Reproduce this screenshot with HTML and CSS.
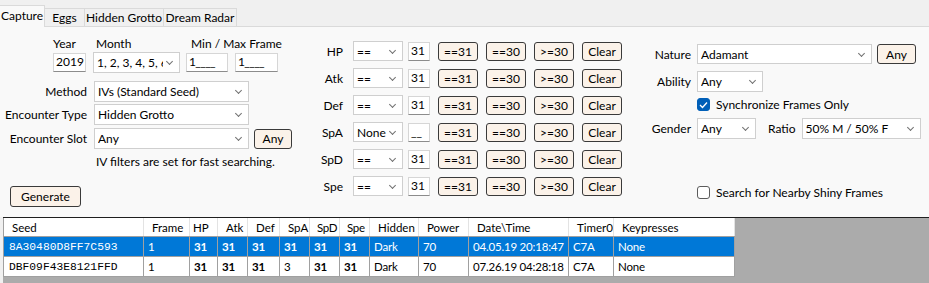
FILE: index.html
```html
<!DOCTYPE html>
<html lang="en">
<head>
  <meta charset="UTF-8">
  <title>Capture</title>
  <link rel="stylesheet" href="styles.css">
</head>
<body>

<div class="tabs">
  <div class="tab active">Capture</div>
  <div class="tab tab-eggs">Eggs</div>
  <div class="tab tab-grotto">Hidden Grotto</div>
  <div class="tab tab-radar">Dream Radar</div>
</div>

<div class="page">

  <div class="col-left">
    <div class="date-labels">
      <span class="lbl-year">Year</span>
      <span class="lbl-month">Month</span>
      <span>Min / Max Frame</span>
    </div>
    <div class="date-inputs">
      <div class="textbox tb-year">2019</div>
      <div class="combo cb-month"><span class="combo-text">1, 2, 3, 4, 5, 6</span></div>
      <div class="textbox tb-min">1____</div>
      <div class="textbox tb-max">1____</div>
    </div>
    <div class="field-row row-method">
      <span class="field-lbl">Method</span>
      <div class="combo cb-wide"><span class="combo-text">IVs (Standard Seed)</span></div>
    </div>
    <div class="field-row row-type">
      <span class="field-lbl">Encounter Type</span>
      <div class="combo cb-wide"><span class="combo-text">Hidden Grotto</span></div>
    </div>
    <div class="field-row row-slot">
      <span class="field-lbl">Encounter Slot</span>
      <div class="combo cb-wide"><span class="combo-text">Any</span></div>
      <button class="btn btn-any">Any</button>
    </div>
    <div class="note">IV filters are set for fast searching.</div>
    <button class="btn btn-generate">Generate</button>
  </div>

  <div class="col-ivs">
    <div class="iv-row">
      <span class="iv-lbl">HP</span>
      <div class="combo cb-op"><span class="combo-text">==</span></div>
      <div class="textbox tb-iv">31</div>
      <button class="btn btn-iv">==31</button><button class="btn btn-iv">==30</button><button class="btn btn-iv">&gt;=30</button><button class="btn btn-iv">Clear</button>
    </div>
    <div class="iv-row">
      <span class="iv-lbl">Atk</span>
      <div class="combo cb-op"><span class="combo-text">==</span></div>
      <div class="textbox tb-iv">31</div>
      <button class="btn btn-iv">==31</button><button class="btn btn-iv">==30</button><button class="btn btn-iv">&gt;=30</button><button class="btn btn-iv">Clear</button>
    </div>
    <div class="iv-row">
      <span class="iv-lbl">Def</span>
      <div class="combo cb-op"><span class="combo-text">==</span></div>
      <div class="textbox tb-iv">31</div>
      <button class="btn btn-iv">==31</button><button class="btn btn-iv">==30</button><button class="btn btn-iv">&gt;=30</button><button class="btn btn-iv">Clear</button>
    </div>
    <div class="iv-row">
      <span class="iv-lbl">SpA</span>
      <div class="combo cb-op"><span class="combo-text">None</span></div>
      <div class="textbox tb-iv">__</div>
      <button class="btn btn-iv">==31</button><button class="btn btn-iv">==30</button><button class="btn btn-iv">&gt;=30</button><button class="btn btn-iv">Clear</button>
    </div>
    <div class="iv-row">
      <span class="iv-lbl">SpD</span>
      <div class="combo cb-op"><span class="combo-text">==</span></div>
      <div class="textbox tb-iv">31</div>
      <button class="btn btn-iv">==31</button><button class="btn btn-iv">==30</button><button class="btn btn-iv">&gt;=30</button><button class="btn btn-iv">Clear</button>
    </div>
    <div class="iv-row">
      <span class="iv-lbl">Spe</span>
      <div class="combo cb-op"><span class="combo-text">==</span></div>
      <div class="textbox tb-iv">31</div>
      <button class="btn btn-iv">==31</button><button class="btn btn-iv">==30</button><button class="btn btn-iv">&gt;=30</button><button class="btn btn-iv">Clear</button>
    </div>
  </div>

  <div class="col-right">
    <div class="r-row row-nature">
      <span class="r-lbl">Nature</span>
      <div class="combo cb-nature"><span class="combo-text">Adamant</span></div>
      <button class="btn btn-any2">Any</button>
    </div>
    <div class="r-row row-ability">
      <span class="r-lbl">Ability</span>
      <div class="combo cb-ability"><span class="combo-text">Any</span></div>
    </div>
    <div class="check-row row-sync">
      <span class="checkbox checked"><svg width="9" height="8" viewBox="0 0 9 8"><polyline points="1,4 3.5,6.5 8,1.5" fill="none" stroke="#fff" stroke-width="1.3"/></svg></span>
      <span>Synchronize Frames Only</span>
    </div>
    <div class="r-row row-gender">
      <span class="r-lbl">Gender</span>
      <div class="combo cb-gender"><span class="combo-text">Any</span></div>
      <span class="lbl-ratio">Ratio</span>
      <div class="combo cb-ratio"><span class="combo-text">50% M / 50% F</span></div>
    </div>
    <div class="check-row row-shiny">
      <span class="checkbox"></span>
      <span>Search for Nearby Shiny Frames</span>
    </div>
  </div>

</div>

<div class="grid-area">
  <table class="results">
    <colgroup>
      <col class="c-seed"><col class="c-frame"><col class="c-hp"><col class="c-atk"><col class="c-def"><col class="c-spa"><col class="c-spd"><col class="c-spe"><col class="c-hidden"><col class="c-power"><col class="c-date"><col class="c-timer"><col class="c-keys">
    </colgroup>
    <tr>
      <th>Seed</th><th>Frame</th><th class="th-hp">HP</th><th>Atk</th><th>Def</th><th>SpA</th><th class="th-tight">SpD</th><th class="th-tight">Spe</th><th>Hidden</th><th>Power</th><th>Date\Time</th><th>Timer0</th><th>Keypresses</th>
    </tr>
    <tr class="selected">
      <td class="seed">8A30480D8FF7C593</td><td>1</td><td class="b">31</td><td class="b">31</td><td class="b">31</td><td class="b">31</td><td class="b">31</td><td class="b">31</td><td>Dark</td><td>70</td><td>04.05.19 20:18:47</td><td>C7A</td><td>None</td>
    </tr>
    <tr>
      <td class="seed">DBF09F43E8121FFD</td><td>1</td><td class="b">31</td><td class="b">31</td><td class="b">31</td><td>3</td><td class="b">31</td><td class="b">31</td><td>Dark</td><td>70</td><td>07.26.19 04:28:18</td><td>C7A</td><td>None</td>
    </tr>
  </table>
</div>

</body>
</html>
```

FILE: styles.css
```css
body {
  margin: 0;
  width: 929px; height: 283px;
  overflow: hidden;
  background: #f0f0f0;
  font-family: Lato, "Liberation Sans", Arial, sans-serif;
  font-size: 12px;
  color: #000;
}

/* tab strip */
.tabs { height: 26px; display: flex; align-items: flex-end; }
.tab {
  box-sizing: border-box;
  height: 18px; line-height: 17px;
  border: 1px solid #dadada; border-bottom: none;
  margin-left: -1px;
  text-align: center;
  white-space: nowrap;
  background: #f0f0f0;
}
.tab.active {
  width: 45px; height: 22px; line-height: 20px;
  margin-left: 0; margin-bottom: -1px;
  background: #f9f9f9;
  text-align: left; padding-left: 1px;
  border-left: none;
  position: relative; z-index: 1;
}
.tab-eggs { width: 41px; }
.tab-grotto { width: 80px; }
.tab-radar { width: 74px; }

/* tab page */
.page {
  height: 190px;
  background: #f9f9f9;
  border-top: 1px solid #dadada;
  display: flex;
}

.combo {
  box-sizing: border-box;
  position: relative;
  height: 21px; line-height: 19px;
  background: #fff;
  border: 1px solid #cfcfcf;
  padding-left: 3px; padding-right: 16px;
  overflow: hidden; white-space: nowrap;
}
.combo::after {
  content: "";
  position: absolute; right: 7px; top: 6px;
  width: 4px; height: 4px;
  border-right: 1px solid #707070; border-bottom: 1px solid #707070;
  transform: rotate(45deg);
}
.combo-text { display: block; overflow: hidden; }

.textbox {
  box-sizing: border-box;
  height: 19px; line-height: 16px;
  background: #fff;
  border: 1px solid #d6d6d6; border-bottom-color: #8c8c8c;
  padding-left: 2px;
  white-space: nowrap;
  overflow: hidden;
}

.btn {
  box-sizing: border-box;
  height: 19px; padding: 0;
  font: inherit; color: #000;
  background: #fbf2e9;
  border: 1px solid #3a3a3a;
  border-radius: 3px;
}

/* left column */
.col-left { width: 300px; padding-top: 9px; }
.date-labels { display: flex; padding-left: 53px; line-height: 15px; }
.lbl-year { width: 43px; }
.lbl-month { width: 95px; }
.date-inputs { display: flex; align-items: center; padding-left: 53px; margin-top: 1px; height: 21px; }
.tb-year { width: 33px; }
.cb-month { width: 87px; margin-left: 7px; }
.tb-min { width: 42px; margin-left: 6px; letter-spacing: -0.6px; }
.tb-max { width: 43px; margin-left: 7px; letter-spacing: -0.6px; }

.field-row { display: flex; align-items: center; height: 21px; }
.row-method { margin-top: 8px; }
.row-type { margin-top: 2px; }
.row-slot { margin-top: 3px; }
.field-lbl { width: 87px; text-align: right; white-space: nowrap; }
.cb-wide { width: 155px; margin-left: 7px; }
.btn-any { width: 38px; height: 20px; margin-left: 5px; }
.note { padding-left: 96px; margin-top: 5px; line-height: 15px; }
.btn-generate { display: block; width: 71px; height: 21px; margin-left: 10px; margin-top: 17px; }

/* IV filters */
.col-ivs { width: 322px; padding-top: 14px; display: flex; flex-direction: column; gap: 7px; }
.iv-row { display: flex; align-items: center; height: 20px; }
.iv-lbl { width: 43px; text-align: right; }
.cb-op { width: 50px; height: 20px; margin-left: 10px; }
.tb-iv { width: 22px; margin-left: 5px; }
.btn-iv { width: 40px; margin-left: 8px; }

/* right column */
.col-right { width: 300px; padding-top: 17px; }
.r-row { display: flex; align-items: center; height: 21px; }
.r-lbl { width: 69px; text-align: right; margin-right: 6px; }
.row-nature { height: 20px; }
.cb-nature { width: 175px; height: 20px; }
.btn-any2 { width: 39px; height: 20px; margin-left: 5px; }
.row-ability { margin-top: 7px; }
.cb-ability { width: 66px; }
.check-row { display: flex; align-items: center; height: 15px; padding-left: 75px; gap: 6px; white-space: nowrap; }
.row-sync { margin-top: 5px; }
.checkbox {
  box-sizing: border-box;
  width: 13px; height: 13px;
  border: 1px solid #5c5c5c; border-radius: 3px;
  background: #fff;
  display: flex; align-items: center; justify-content: center;
}
.checkbox.checked { background: #005fb8; border-color: #005fb8; }
.row-gender { margin-top: 6px; }
.cb-gender { width: 59px; }
.lbl-ratio { margin-left: 12px; margin-right: 6px; }
.cb-ratio { width: 119px; }
.row-shiny { margin-top: 46px; }

/* results grid */
.grid-area {
  height: 65px;
  margin-left: 3px;
  background: #ababab;
  border-top: 1px solid #1f1f1f;
}
.results {
  border-collapse: collapse;
  table-layout: fixed;
  width: 732px;
  background: #fff;
  border-left: 1px solid #a0a0a0;
  font-size: 11.5px;
}
.c-seed { width: 140px; }
.c-frame { width: 46px; }
.c-hp { width: 28px; }
.c-atk { width: 30px; }
.c-def { width: 32px; }
.c-spa { width: 30px; }
.c-spd { width: 30px; }
.c-spe { width: 30px; }
.c-hidden { width: 49px; }
.c-power { width: 50px; }
.c-date { width: 100px; }
.c-timer { width: 45px; }
.c-keys { width: 121px; }
.results th {
  height: 18px; padding: 0 0 0 8px;
  font-weight: normal; text-align: left;
  border-right: 1px solid #e3e3e3;
  border-bottom: 1px solid #a0a0a0;
  white-space: nowrap; overflow: hidden;
}
.results th.th-hp { padding-left: 3px; }
.results th.th-tight { padding-left: 7px; letter-spacing: -0.3px; }
.results td {
  height: 19px; padding: 0 0 0 4px;
  border-right: 1px solid #a0a0a0;
  border-bottom: 1px solid #a0a0a0;
  white-space: nowrap; overflow: hidden;
  letter-spacing: -0.2px;
}
.results td.seed { font-family: "Liberation Mono", monospace; font-size: 11.3px; padding-left: 5px; letter-spacing: 0; }
.results td.b { font-weight: bold; }
.results tr.selected td { background: #0078d7; color: #fff; }
```
